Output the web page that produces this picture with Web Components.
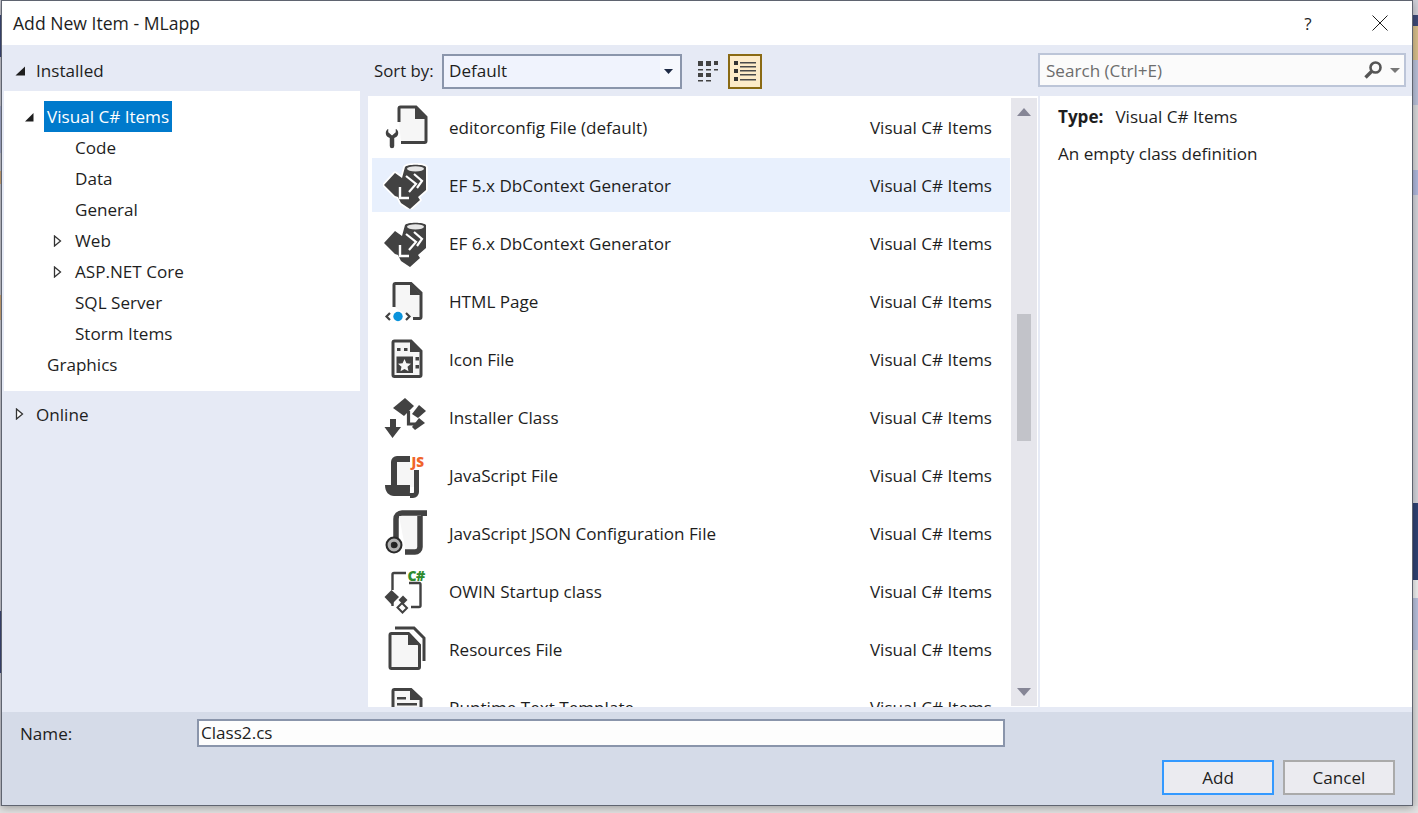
<!DOCTYPE html>
<html><head><meta charset="utf-8">
<style>
html,body{margin:0;padding:0;height:813px;overflow:hidden}
body{font:17.1px "Open Sans","Liberation Sans",sans-serif;color:#1e1e1e;
background:
 linear-gradient(#e2e2e2,#e2e2e2) 0 806px/100% 7px no-repeat,
 linear-gradient(90deg,transparent 1164px,#b2b2b2 1164px,#b2b2b2 1180px,transparent 1180px,transparent 1186px,#4a5a8c 1186px,#4a5a8c 1199px,transparent 1199px) 0 806px/100% 7px no-repeat,
 linear-gradient(#d0d0d8 0,#d0d0d8 15px,#3e4a78 15px,#3e4a78 26px,#d8bf8c 26px,#d8bf8c 60px,#b9c0d8 60px,#b9c0d8 105px,#d8d8da 105px,#d8d8da 170px,#b0b8dc 170px,#b0b8dc 195px,#d4d4da 195px,#d4d4da 503px,#2f4273 503px,#2f4273 580px,#eeeeee 580px,#eeeeee 598px,#b8c0dc 598px,#b8c0dc 650px,#dcdcdc 650px) right top/5px 100% no-repeat,
 linear-gradient(#c8c8d0 0,#c8c8d0 15px,#3e4a78 15px,#3e4a78 57px,#c8c8d0 57px,#c8c8d0 106px,#a8b0d0 106px,#a8b0d0 153px,#c8c8d0 153px,#c8c8d0 171px,#d0a878 171px,#d0a878 184px,#c8c8d0 184px,#c8c8d0 295px,#d0a878 295px,#d0a878 320px,#c8c8d0 320px,#c8c8d0 611px,#3e4a78 611px,#3e4a78 673px,#c8c8d0 673px) left top/1px 100% no-repeat,
 #d4d4da;}
</style></head><body>
<add-item-dialog>
 <dialog-titlebar slot="title">Add New Item - MLapp</dialog-titlebar>
 <tree-panel slot="left">
  <tree-head slot="installed" open>Installed</tree-head>
  <tree-row level="1" arrow="open" selected>Visual C# Items</tree-row>
  <tree-row level="2">Code</tree-row>
  <tree-row level="2">Data</tree-row>
  <tree-row level="2">General</tree-row>
  <tree-row level="2" arrow="closed">Web</tree-row>
  <tree-row level="2" arrow="closed">ASP.NET Core</tree-row>
  <tree-row level="2">SQL Server</tree-row>
  <tree-row level="2">Storm Items</tree-row>
  <tree-row level="1">Graphics</tree-row>
  <tree-head slot="online">Online</tree-head>
 </tree-panel>
 <sort-bar slot="sort"></sort-bar>
 <search-box slot="search"></search-box>
 <item-list slot="list">
  <item-row icon="config">editorconfig File (default)</item-row>
  <item-row icon="ef" selected>EF 5.x DbContext Generator</item-row>
  <item-row icon="ef">EF 6.x DbContext Generator</item-row>
  <item-row icon="html">HTML Page</item-row>
  <item-row icon="ico">Icon File</item-row>
  <item-row icon="installer">Installer Class</item-row>
  <item-row icon="js">JavaScript File</item-row>
  <item-row icon="json">JavaScript JSON Configuration File</item-row>
  <item-row icon="owin">OWIN Startup class</item-row>
  <item-row icon="res">Resources File</item-row>
  <item-row icon="text">Runtime Text Template</item-row>
 </item-list>
 <item-details slot="details"></item-details>
 <dialog-footer slot="footer"></dialog-footer>
</add-item-dialog>
<script>
function def(name,html,extra){
  const t=document.createElement('template');t.innerHTML=html;
  customElements.define(name,class extends HTMLElement{
    constructor(){super();this.attachShadow({mode:'open'}).appendChild(t.content.cloneNode(true));}
    connectedCallback(){if(extra)extra(this,this.shadowRoot);}
  });
}
const D='#424242';
const ICONS={
config:`<path d="M16 19V5.500a1.500 1.500 0 0 1 1.500-1.500H33L43 14V38a1.500 1.500 0 0 1-1.500 1.500H18" fill="#f6f6f6" stroke="${D}" stroke-width="3"/><path d="M32 4L44 16H32z" fill="${D}"/><path d="M4 24v5l3 2.500 3-2.500v-5c2.500 1.500 4 3.500 4 6 0 2.500-1.500 4.500-4 5.500V43a2.500 2.500 0 0 1-6 0V35.500C1.500 34.500 0 32.500 0 30c0-2.500 1.500-4.500 4-6z" transform="translate(2 0)" fill="${D}" stroke="#fff" stroke-width="1.500"/>`,
ef:`<path id="b" d="M1 24L12 12l7 5 3-11c2-3 19-3 21 0V29l-8 7 2 3-10 9-9-6-3-6-3-1z" fill="${D}" stroke="#fff" stroke-width="3.500" stroke-linejoin="round" paint-order="stroke"/><ellipse cx="32.500" cy="7.800" rx="8.500" ry="2.600" fill="#e6e6e6"/><path d="M23 15l10 8-7 8M31 13l8 7-5 7" fill="none" stroke="#fff" stroke-width="2.200"/><path d="M17 26V37H26" fill="none" stroke="#fff" stroke-width="2.400"/>`,
html:`<path d="M11 30V8a1.500 1.500 0 0 1 1.500-1.500H28L38 16V40a1.500 1.500 0 0 1-1.500 1.500H30" fill="#f6f6f6" stroke="${D}" stroke-width="3"/><path d="M27 6.500L38.500 18H27z" fill="${D}"/><path d="M7 36l-3.500 3.500L7 43M23 36l3.500 3.500L23 43" fill="none" stroke="${D}" stroke-width="2.200"/><circle cx="15" cy="39.500" r="4.700" fill="#0a93dc"/>`,
ico:`<path d="M10 7.500a1.500 1.500 0 0 1 1.500-1.500H28L38 16V40a1.500 1.500 0 0 1-1.500 1.500h-25A1.500 1.500 0 0 1 10 40z" fill="#f6f6f6" stroke="${D}" stroke-width="3"/><path d="M27 6L38 17H27z" fill="${D}"/><path d="M13.500 21.500H30V38H13.500z" fill="${D}"/><path d="M21.500 24l1.900 4.300 4.600.4-3.500 3 1 4.600-4-2.400-4 2.400 1-4.600-3.500-3 4.600-.4z" fill="#f6f6f6"/><path d="M14 13h3.500v3H14zM21 13h3.500v3H21zM32.500 22h3.500v3.500h-3.500zM32.500 30h3.500v3.500h-3.500z" fill="${D}"/>`,
installer:`<path d="M10 15L22 5l9 8-10 10z" fill="${D}"/><path d="M29 21l7-9 7 6-8 7z" fill="${D}"/><path d="M29 34l7-9 6 5-10 7z" fill="${D}"/><path d="M25.500 18V31H33" fill="none" stroke="${D}" stroke-width="3.200"/><path d="M7 26h6v8h5L9.500 45 1.500 34H7z" fill="${D}"/>`,
js:`<path d="M11 35V11a3 3 0 0 1 3-3H27" fill="none" stroke="${D}" stroke-width="6"/><path d="M14 11H27V17H31V36H14z" fill="#f6f6f6"/><path d="M33.500 19V41a3.500 3.500 0 0 1-3.500 3.500H27" fill="none" stroke="${D}" stroke-width="5"/><path d="M2 34H27V40a4 4 0 0 0 3 5H11c-5 0-9-4-9-11z" fill="${D}"/><text x="28.500" y="15.500" font-family="Open Sans,sans-serif" font-weight="800" font-size="13.500" fill="#f0642a" letter-spacing="0">JS</text>`,
json:`<path d="M13 32V10a6 6 0 0 1 6-6h25" fill="none" stroke="${D}" stroke-width="5.500"/><path d="M16 7h18v34H22V38z" fill="#f6f6f6"/><path d="M37 7V38a5 5 0 0 1-5 5H22" fill="none" stroke="${D}" stroke-width="5.500"/><path d="M38 3h6v4h-6z" fill="${D}"/><circle cx="11" cy="36" r="8.500" fill="#2a2a2a"/><circle cx="11" cy="36" r="4.800" fill="none" stroke="#b0b0b0" stroke-width="3.200"/><circle cx="12" cy="36" r="2.600" fill="#222"/>`,
owin:`<path d="M23 6H11a1.500 1.500 0 0 0-1.500 1.500V23M26 16h10a1.500 1.500 0 0 1 1.500 1.500V38.500a1.500 1.500 0 0 1-1.500 1.500H28M9.500 34v5" fill="none" stroke="${D}" stroke-width="2.400"/><text x="24.500" y="13.500" font-family="Open Sans,sans-serif" font-weight="800" font-size="14" fill="#2e8b2e" letter-spacing="-.5">C#</text><path d="M8.500 23l7.500 7-7.500 7.500L1.500 30z" fill="${D}"/><path d="M20 28.500l4.500 4.500-4.500 4.500-4.500-4.500z" fill="${D}"/><path d="M19 36l5 5-4.500 4.500-5-5z" fill="#fff" stroke="${D}" stroke-width="2"/>`,
res:`<path d="M12 3H31L41 13V36" fill="none" stroke="${D}" stroke-width="3"/><path d="M7 10a1.500 1.500 0 0 1 1.500-1.500H25.500L36.500 20V42a1.500 1.500 0 0 1-1.500 1.500H8.500A1.500 1.500 0 0 1 7 42z" fill="#f6f6f6" stroke="${D}" stroke-width="3"/><path d="M25 8.500L36.500 20H25z" fill="${D}"/>`,
text:`<path d="M10 8a1.500 1.500 0 0 1 1.500-1.500H28L38 16V40H10z" fill="#f6f6f6" stroke="${D}" stroke-width="3"/><path d="M27 6L38 17H27z" fill="${D}"/><path d="M14 14h9v2.500h-9zM14 20h20v2.500H14z" fill="${D}"/>`
};

def('add-item-dialog',`<style>
:host{display:block;box-sizing:border-box;width:1412px;height:806px;margin-left:1px;border:1px solid #5f6470;background:#fff;box-shadow:0 2px 8px rgba(0,0,0,.3)}
.frame{display:grid;height:100%;grid-template-rows:44px 667px 1fr}
.main{background:#e6eaf5;display:grid;grid-template-columns:356px 678px 1fr;padding-left:2px;grid-template-rows:51px 611px;box-sizing:border-box}
.left{grid-row:1/3;grid-column:1}
.sort{grid-column:2;grid-row:1;padding-left:14px}
.search{grid-column:3;grid-row:1}
.list{grid-column:2;grid-row:2;margin-left:8px;width:670px}
.det{grid-column:3;grid-row:2;margin-left:2px}
</style><div class="frame"><slot name="title"></slot>
<div class="main">
 <div class="left"><slot name="left"></slot></div>
 <div class="sort"><slot name="sort"></slot></div>
 <div class="search"><slot name="search"></slot></div>
 <div class="list"><slot name="list"></slot></div>
 <div class="det"><slot name="details"></slot></div>
</div>
<slot name="footer"></slot></div>`);

def('dialog-titlebar',`<style>
:host{display:flex;align-items:center;height:44px;background:#fff;padding-left:11px;font-size:17.6px;box-sizing:border-box}
.t{flex:1;padding-bottom:1px}
.q{width:20px;text-align:center;margin-right:54px;font-size:17px}
svg{margin-right:24px}
</style><div class="t"><slot></slot></div><div class="q">?</div>
<svg width="16" height="16" viewBox="0 0 16 16"><path d="M.5.500l15 15M15.500.500l-15 15" stroke="#1e1e1e" stroke-width="1" fill="none"/></svg>`);

def('tree-panel',`<style>
:host{display:block}
.box{background:#fff;padding:10px 0 11px;margin:0;height:279px}
</style><slot name="installed"></slot><div class="box"><slot></slot></div><slot name="online"></slot>`);

def('tree-head',`<style>
:host{display:flex;align-items:center;height:46px;padding:5px 0 0 10px;box-sizing:border-box}
:host([slot=online]){padding-top:0}
svg{width:12px;height:12px;margin-right:10px}
</style><svg viewBox="0 0 12 12"></svg><span><slot></slot></span>`,(h,s)=>{
 s.querySelector('svg').innerHTML=h.hasAttribute('open')?'<path d="M11 1.500V10.500H1.500z" fill="#1e1e1e"/>':'<path d="M2.500 1l6 5-6 5z" fill="#fff" stroke="#333" stroke-width="1.300"/>';
});

def('tree-row',`<style>
:host{display:flex;align-items:center;height:31px;box-sizing:border-box}
svg{width:12px;height:12px;flex:none}
.a{width:12px;height:12px;display:flex;flex:none}
span{display:block;padding:0 3px;height:31px;line-height:32px;white-space:nowrap}
:host([selected]) span{background:#007acc;color:#fff}
</style><div class="a"></div><span><slot></slot></span>`,(h,s)=>{
 const lvl=h.getAttribute('level'),arrow=h.getAttribute('arrow'),a=s.querySelector('.a');
 h.style.paddingLeft=(lvl==='1'?19:48)+'px';
 a.style.marginRight=(lvl==='1'?9:8)+'px';
 if(arrow==='open')a.innerHTML='<svg viewBox="0 0 12 12"><path d="M10.500 2V10.500H2z" fill="#1e1e1e"/></svg>';
 if(arrow==='closed')a.innerHTML='<svg viewBox="0 0 12 12"><path d="M2.500 1l6 5-6 5z" fill="#fff" stroke="#333" stroke-width="1.300"/></svg>';
});

def('sort-bar',`<style>
:host{display:flex;align-items:center;height:51px;padding-top:1px;box-sizing:border-box}
.l{width:68px;flex:none;white-space:nowrap;font-size:16.800px;padding-bottom:2px}
.sel{box-sizing:border-box;width:240px;height:35px;border:2px solid #8a95ab;background:linear-gradient(90deg,#f0f3fd 0,#f0f3fd 216px,#f6f8fd 216px);display:flex;align-items:center;justify-content:space-between;padding:0 7px 0 5px}
.sel span{padding-bottom:2px}
.grid{margin-left:15px;width:22px;height:22px}
.tg{box-sizing:border-box;margin-left:9px;width:34px;height:35px;border:2px solid #8a6a14;background:#fdebc8;display:flex;align-items:center;justify-content:center}
</style><div class="l">Sort by:</div>
<div class="sel"><span>Default</span><svg width="9" height="5" viewBox="0 0 9 5"><path d="M0 0h9L4.500 5z" fill="#1e2a44"/></svg></div>
<svg class="grid" viewBox="0 0 22 22" fill="#424242"><path d="M1 1h5v5H1zM9 1h5v5H9zM17 1h4v4h-4zM1 9h5v1.500H1zM9 9h5v1.500H9zM17 9h4v1.500h-4zM1 13h5v4H1zM9 13h5v4H9zM1 20h5v1.500H1zM9 20h5v1.500H9z"/></svg>
<div class="tg"><svg width="24" height="24" viewBox="0 0 24 24"><path d="M1 2h4v4H1zM1 10h4v4H1zM1 18h4v4H1z" fill="#333"/><path d="M7 3h16v1.500H7zM7 7h16v1.500H7zM7 11h16v1.500H7zM7 15h16v1.500H7zM7 20h16v1.500H7z" fill="#4a4a4a"/></svg></div>`);

def('search-box',`<style>
:host{display:flex;box-sizing:border-box;width:368px;height:34px;margin-top:8px;border:2px solid #bcc5d8;background:#fbfbfb;align-items:center;padding:0 4px 0 6px;color:#6d6d6d}
span{flex:1}
.g{margin-right:7px}
</style><span>Search (Ctrl+E)</span>
<svg class="g" width="20" height="20" viewBox="0 0 20 20"><circle cx="12.500" cy="7.500" r="5" fill="none" stroke="#555" stroke-width="2.600"/><path d="M8.500 11.500L2.500 17.500" stroke="#555" stroke-width="3.400"/></svg>
<svg width="10" height="5" viewBox="0 0 10 5"><path d="M0 0h10L5 5z" fill="#777"/></svg>`);

def('item-list',`<style>
:host{display:flex;box-sizing:border-box;width:670px;height:611px;background:#fff}
.rows{width:642px;height:611px;overflow:hidden;padding:4px 0 0 4px;box-sizing:border-box;flex:none}
.sb{margin:2px 0 1px 1px;width:26px;background:#e6e6ec;display:flex;flex-direction:column;align-items:center;box-sizing:border-box;padding-top:10px}
.th{width:14px;height:127px;background:#c2c3c9;margin-top:198px}
.sp{flex:1}
.dn{margin-bottom:10px}
</style><div class="rows"><slot></slot></div>
<div class="sb"><svg width="14" height="8" viewBox="0 0 14 8"><path d="M7 0l7 8H0z" fill="#868696"/></svg><div class="th"></div><div class="sp"></div><svg class="dn" width="14" height="8" viewBox="0 0 14 8"><path d="M0 0h14L7 8z" fill="#868696"/></svg></div>`);

def('item-row',`<style>
:host{display:flex;align-items:center;height:54px;margin-bottom:4px;padding-left:11px;box-sizing:border-box;white-space:nowrap}
:host([selected]){background:#e8f0fd}
svg{width:48px;height:48px;flex:none;margin-right:18px}
.n{flex:1}
.c{margin-right:18px}
</style><svg viewBox="0 0 48 48"></svg><div class="n"><slot></slot></div><div class="c">Visual C# Items</div>`,(h,s)=>{
 s.querySelector('svg').innerHTML=ICONS[h.getAttribute('icon')];
});

def('item-details',`<style>
:host{display:block;box-sizing:border-box;height:611px;background:#fff;padding:9px 18px}
.r{height:23px;line-height:23px;margin-bottom:14px}
b{font-weight:700;margin-right:12px}
</style><div class="r"><b>Type:</b>Visual C# Items</div><div class="r">An empty class definition</div>`);

def('dialog-button',`<style>
:host{display:flex;box-sizing:border-box;width:112px;height:35px;align-items:center;justify-content:center;background:#ebebf0;border:2px solid #aaa}
:host([primary]){border-color:#3399ff}
</style><slot></slot>`);

def('dialog-footer',`<style>
:host{display:block;box-sizing:border-box;background:#d5dbe8;padding:7px 0 0 18px;height:93px}
.r1{display:flex;align-items:center;height:28px}
.l{width:177px;flex:none}
.in{box-sizing:border-box;width:808px;height:28px;border:2px solid #8a95ab;background:#fdfdfd;padding:0 0 0 2px;line-height:24px}
.r2{display:flex;justify-content:flex-end;gap:9px;margin-top:13px;padding-right:17px}
</style><div class="r1"><div class="l">Name:</div><div class="in">Class2.cs</div></div>
<div class="r2"><dialog-button primary>Add</dialog-button><dialog-button>Cancel</dialog-button></div>`);
</script>
</body></html>
